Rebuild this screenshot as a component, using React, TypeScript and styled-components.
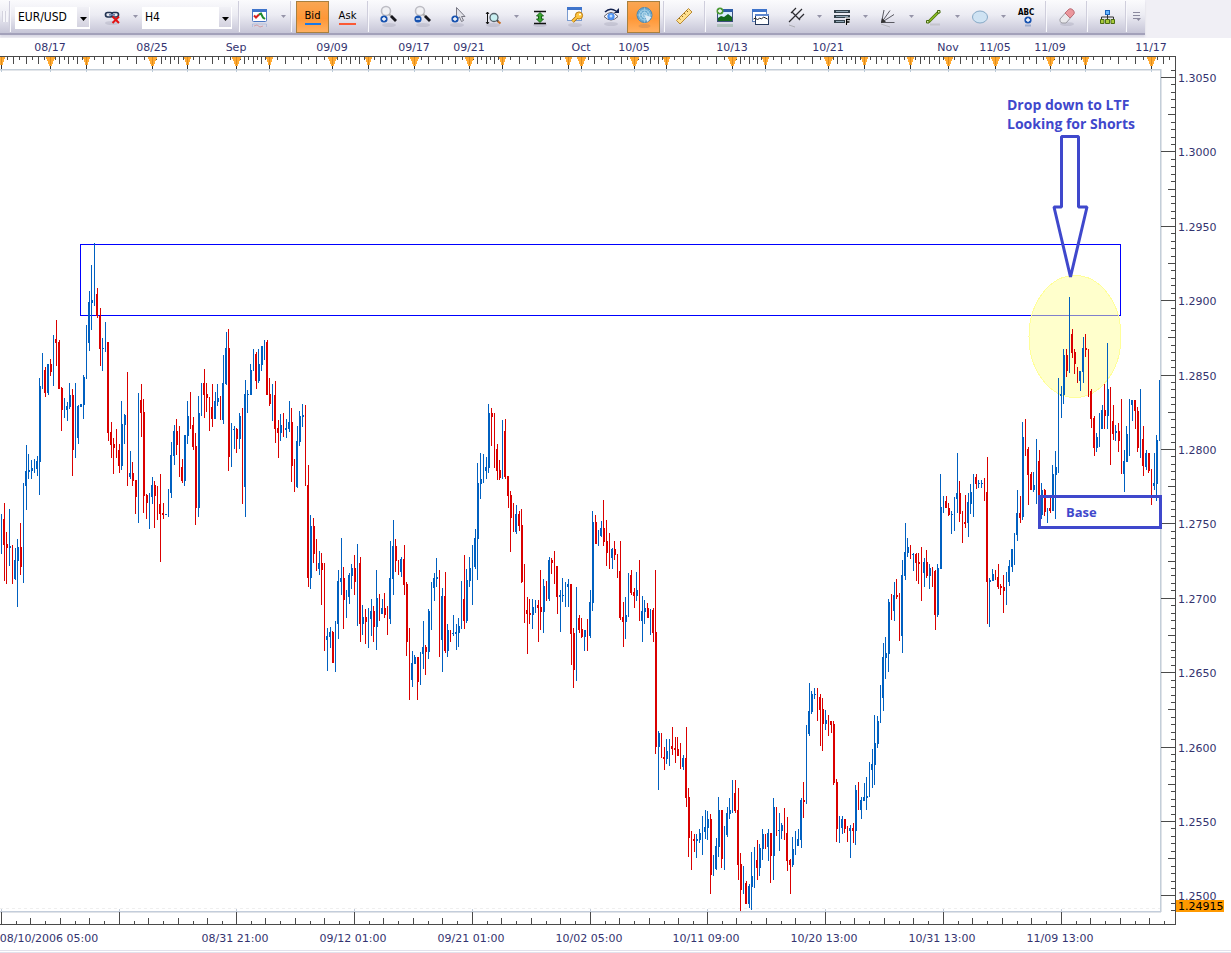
import React from "react";
import styled, { createGlobalStyle, css } from "styled-components";

const GlobalStyle = createGlobalStyle`
  * { box-sizing: border-box; }
  body { margin: 0; background: #fff; font-family: "DejaVu Sans", Verdana, sans-serif; }
`;

/* ---------- Toolbar ---------- */

const Header = styled.header`
  height: 38px;
  background: #f0eff5;
`;

const Toolbar = styled.div`
  display: flex;
  align-items: stretch;
  width: fit-content;
  height: 35px;
  background: linear-gradient(#fbfbfd 0%, #ececf3 45%, #c6c5d7 100%);
  border-bottom: 2px solid #a3a1ba;
  box-shadow: 0 2px 2px #d9d8e4;
`;

const Grip = styled.div`
  width: 10px;
  margin: 11px 0;
  border-left: 2px solid transparent;
  background: repeating-linear-gradient(90deg, #d4d3de 0 1px, #f6f6fa 1px 3px) content-box;
  padding-right: 2px;
`;

const Separator = styled.div`
  width: 1px;
  margin: 1px 0;
  background: #f8f8fc;
  box-shadow: -1px 0 0 #cfcedc;
`;

const Group = styled.div<{ $left?: number; $right?: number; $gap?: number }>`
  display: flex;
  align-items: center;
  gap: ${(p) => p.$gap ?? 0}px;
  padding: 0 ${(p) => p.$right ?? 4}px 0 ${(p) => p.$left ?? 4}px;
`;

const SelectBox = styled.div<{ $width: number }>`
  position: relative;
  width: ${(p) => p.$width}px;
  height: 22px;
  margin-right: 6px;
`;

const Select = styled.select`
  appearance: none;
  width: 100%;
  height: 100%;
  border: 0;
  border-radius: 0;
  padding: 0 16px 2px 3px;
  background: #fff;
  color: #000;
  font: 12px "DejaVu Sans Condensed", "DejaVu Sans", sans-serif;
`;

const SelectArrow = styled.span`
  position: absolute;
  top: 1px;
  right: 1px;
  bottom: 1px;
  width: 12px;
  display: flex;
  align-items: center;
  justify-content: center;
  padding-top: 4px;
  background: linear-gradient(#f1f1f6, #d4d3e0);
  pointer-events: none;
`;

const active = css`
  border: 1px solid #a8803f;
  background: linear-gradient(#f9a653, #ff9736 55%, #ffb061);
`;

const ToolButton = styled.button<{ $active?: boolean; $width?: number }>`
  display: flex;
  flex-direction: column;
  align-items: center;
  justify-content: center;
  width: ${(p) => p.$width ?? 32}px;
  height: 32px;
  padding: 0;
  border: 1px solid transparent;
  background: none;
  color: #000;
  font: 10px "DejaVu Sans", sans-serif;
  ${(p) => p.$active && active}
`;

const DropButton = styled(ToolButton)`
  width: 14px;
`;

const QuoteLabel = styled.span<{ $color: string }>`
  padding-bottom: 1px;
  line-height: 13px;
  border-bottom: 2px solid ${(p) => p.$color};
`;

const Glyph = styled.svg`
  display: block;
  flex: none;
  overflow: visible;
`;

const Caret = ({ dark = false }: { dark?: boolean }) => (
  <Glyph width="7" height="4" viewBox="0 0 7 4">
    <path d={dark ? "M0 0h7L3.5 4z" : "M1 0h5L3.5 3z"} fill={dark ? "#000" : "#9594a8"} />
  </Glyph>
);

const Badge = ({ x, y, minus }: { x: number; y: number; minus?: boolean }) => (
  <g>
    <circle cx={x} cy={y} r="3.6" fill="#1853b0" />
    <path d={minus ? `M${x - 2} ${y}h4` : `M${x - 2} ${y}h4M${x} ${y - 2}v4`} stroke="#fff" strokeWidth="1.3" />
  </g>
);

const Shade = ({ x = 16, y = 25 }: { x?: number; y?: number }) => (
  <ellipse cx={x} cy={y} rx="7" ry="2" fill="#8d8ca0" opacity=".25" />
);

const Magnifier = ({ minus }: { minus?: boolean }) => (
  <>
    <Shade x={16} />
    <circle cx="13" cy="11" r="4.5" fill="#f1f1f4" stroke="#bdbdc4" strokeWidth="1.6" />
    <path d="M16 14l2.5 2.5" stroke="#aaa" strokeWidth="2" />
    <path d="M18 16l5 5" stroke="#16161c" strokeWidth="2.8" />
    <Badge x={11} y={19} minus={minus} />
  </>
);

const icons: Record<string, React.ReactNode> = {
  unlink: (
    <>
      <Shade y={23} />
      <g fill="none" stroke="#233452" strokeWidth="1.7">
        <rect x="9.5" y="12.5" width="7" height="4.5" rx="2.2" />
        <rect x="15.5" y="12.5" width="7" height="4.5" rx="2.2" />
        <path d="M13 14.8h6" stroke="#6d83ad" />
      </g>
      <path d="M16.5 16.5l6.5 6.5M23 16.5l-6.5 6.5" stroke="#e31212" strokeWidth="2" />
    </>
  ),
  chart: (
    <>
      <rect x="8.5" y="9.5" width="14" height="12" rx="1" fill="#fff" stroke="#4a77c4" />
      <path d="M8 9h15v3H8z" fill="#3f74cb" />
      <path d="M10 15.5l2 2 3-3" fill="none" stroke="#d6201d" strokeWidth="2" />
      <path d="M15 14.5l2-1 2 4 2 1.500" fill="none" stroke="#1e8a2e" strokeWidth="2" />
      <path d="M8.5 27v-3h14v3" fill="none" stroke="#8fa7d3" opacity=".5" />
      <path d="M10 26l3-1 3 2 3-1" fill="none" stroke="#c55" opacity=".4" />
    </>
  ),
  zoomIn: <Magnifier />,
  zoomOut: <Magnifier minus />,
  pointerZoom: (
    <>
      <Shade />
      <path d="M15.5 7.5v12l3-2.5 2 4.5 2-1-2-4h3.5z" fill="#e3e3e9" stroke="#777783" />
      <Badge x={14} y={19} />
    </>
  ),
  verticalZoom: (
    <>
      <Shade x={18} />
      <path d="M12.500 12v12M11 14l1.5-2 1.5 2M11 22l1.5 2 1.5-2" fill="none" stroke="#111" />
      <circle cx="19" cy="17.5" r="4" fill="#c9f0f2" stroke="#55636b" strokeWidth="1.3" />
      <path d="M22 20.5l1.5 1" stroke="#444" strokeWidth="2" />
      <path d="M23 21.5l2.5 2" stroke="#c56b20" strokeWidth="2" />
    </>
  ),
  fit: (
    <>
      <Shade x={15} />
      <path d="M9 11.5h12M9 23.5h12" stroke="#111" strokeWidth="1.5" />
      <path d="M15 12.5l3.5 3.5h-2v3h2L15 22.500 11.500 19h2v-3h-2z" fill="#3aa52f" stroke="#176515" />
    </>
  ),
  windowKey: (
    <>
      <Shade />
      <rect x="8.5" y="7.5" width="14" height="13" fill="#fafbfe" stroke="#7a9bd0" />
      <path d="M8 7h15v3H8z" fill="#3f74cb" />
      <path d="M13.5 21.5l4.5-4.5" stroke="#a76a08" strokeWidth="3.4" />
      <circle cx="20" cy="15.5" r="3.6" fill="#ffc741" stroke="#b97911" />
      <path d="M13.5 21.5l4.5-4.5" stroke="#ffc741" strokeWidth="1.8" />
      <circle cx="21" cy="14.5" r="1" fill="#fff" />
    </>
  ),
  eye: (
    <>
      <Shade x={18} y={24} />
      <path d="M11 16.5q7-8 14 0q-7 7-14 0z" fill="#f7f7fa" stroke="#5b5b68" />
      <circle cx="18" cy="16.5" r="3.6" fill="#4c8ff0" />
      <circle cx="18" cy="16" r="1.5" fill="#bfe0ff" />
      <path d="M12 12q5-5 11-1" fill="none" stroke="#10204e" strokeWidth="1.5" />
      <path d="M21 13h5V8z" fill="#10204e" />
    </>
  ),
  radar: (
    <>
      <circle cx="16.5" cy="15" r="7.5" fill="#6aa9cf" stroke="#4b87b3" />
      <circle cx="16.5" cy="15" r="5" fill="none" stroke="#a9d4ea" />
      <circle cx="16.5" cy="15" r="2.5" fill="none" stroke="#c6e5f4" />
      <path d="M16.5 7.5v15M9 15h15M11 10l11 10M11 20l11-10" stroke="#a9d4ea" strokeWidth=".6" />
      <path d="M16.5 15l7 2-4 5z" fill="#dcebf5" />
      <ellipse cx="16.5" cy="26" rx="6" ry="2" fill="#c98a55" opacity=".5" />
    </>
  ),
  ruler: (
    <>
      <path d="M8.5 20.5L20.5 8.5l3.5 3.5L12 24z" fill="#ffe08f" stroke="#b98a34" />
      <path d="M11 18l1.5 1.5M13.5 15.5l1.5 1.5M16 13l1.5 1.5M18.5 10.5L20 12" stroke="#8a6420" />
    </>
  ),
  addImage: (
    <>
      <path d="M8 24h16v3H8z" fill="#4c8b57" opacity=".25" />
      <rect x="8.5" y="9.5" width="15" height="12" fill="#d9ecff" stroke="#3c4f7c" />
      <path d="M8 9h16v3H8z" fill="#2e5da8" />
      <path d="M9 21v-3l3-2 3 1 4-3 4 3v4z" fill="#13661c" />
      <circle cx="11" cy="11" r="3.5" fill="#4c9a35" />
      <path d="M9 11h4M11 9v4" stroke="#fff" strokeWidth="1.3" />
    </>
  ),
  windows: (
    <>
      <rect x="8.5" y="9.5" width="14" height="12" fill="#fff" stroke="#5b7fb9" />
      <path d="M8 9h15v3H8z" fill="#3f74cb" />
      <rect x="11.5" y="14.5" width="13" height="10" fill="#fff" stroke="#26395e" />
      <path d="M11 14h14v2H11z" fill="#5d86cc" />
      <path d="M9.500 19l2-1 2 2 2-2 2 1 2-2 4 2" fill="none" stroke="#222" />
    </>
  ),
  pitchfork: (
    <>
      <path d="M9 22L22 9M12 12l8 8M11 13l5-5M19 19l5-5" fill="none" stroke="#2c2c31" strokeWidth="1.2" />
      <path d="M9 25l6 2" stroke="#888" opacity=".5" />
    </>
  ),
  fibonacci: (
    <>
      <path d="M8 11.5h16M8 16.5h16M8 21.5h11" stroke="#34424b" strokeWidth="3" />
      <path d="M10 11.5h12M10 16.5h12M10 21.5h8" stroke="#90a6b4" />
      <path d="M20.5 25v-6h3.5M20.5 22h3" fill="none" stroke="#fff" strokeWidth="3" />
      <path d="M20.5 25v-5.5h3.5M20.5 22h3" fill="none" stroke="#000" strokeWidth="1.3" />
    </>
  ),
  fan: (
    <>
      <path d="M9.5 22.5L12 10M9.5 22.5L18 10.5M9.5 22.5L22 14.5M9.5 22.5h13" fill="none" stroke="#5a5a62" />
      <path d="M9 23l1-5 4 4z" fill="#333" />
      <path d="M9 24l9 3" stroke="#888" opacity=".4" />
    </>
  ),
  line: (
    <>
      <path d="M12 24.5h10" stroke="#999" strokeWidth="2" opacity=".3" />
      <path d="M10.5 22L21 11.5" stroke="#4f7410" strokeWidth="3" />
      <path d="M10.5 22L21 11.5" stroke="#8bbf24" strokeWidth="1.5" />
      <path d="M8.5 20.5H11V23H8.500zM19.5 10.5H22V13h-2.5z" fill="#d9efa6" stroke="#456a0d" />
    </>
  ),
  ellipse: <ellipse cx="16" cy="17" rx="7.5" ry="6" fill="#cfe3f3" stroke="#86a9c6" />,
  text: (
    <>
      <text x="8" y="15" fontSize="8" fontWeight="700" fontFamily="DejaVu Sans Condensed, sans-serif" fill="#000">ABC</text>
      <Badge x={18} y={20} />
      <path d="M15 25.5h6" stroke="#5173ac" strokeWidth="2" opacity=".4" />
    </>
  ),
  eraser: (
    <>
      <Shade y={24} />
      <path d="M9 19l8-9 5 5-7 8h-4q-3-1-2-4z" fill="#e9e9ec" stroke="#9b9ba3" />
      <path d="M14 13l4-4q2-1 4 1t1 4l-4 4z" fill="#eb969c" stroke="#bd7079" />
    </>
  ),
  tree: (
    <>
      <path d="M16.5 14v3M10.5 20v-3h12v3M16.5 17v3" fill="none" stroke="#333" />
      <rect x="14.5" y="10.5" width="4" height="4" fill="#66b5ff" stroke="#1c66bd" />
      <path d="M9.5 19.5H13v4H9.500zM14.500 19.500h4v4h-4zM20 19.500h3.500v4H20z" fill="#a9cb3c" stroke="#4b6b12" />
    </>
  ),
};

const Tool = ({ icon, label, ...rest }: { icon: string; label: string; $active?: boolean; $width?: number }) => (
  <ToolButton type="button" aria-label={label} {...rest}>
    <Glyph width="32" height="34" viewBox="0 0 32 34">{icons[icon]}</Glyph>
  </ToolButton>
);

const Drop = ({ label }: { label: string }) => (
  <DropButton type="button" aria-label={label}><Caret /></DropButton>
);

const Picker = ({ label, value, options, width }: { label: string; value: string; options: string[]; width: number }) => (
  <SelectBox $width={width}>
    <Select aria-label={label} defaultValue={value}>
      {options.map((o) => <option key={o}>{o}</option>)}
    </Select>
    <SelectArrow><Caret dark /></SelectArrow>
  </SelectBox>
);

/* ---------- Chart data ---------- */

/* x, direction (u/d), high-low, then an optional body: side + top-bottom */
const candleData = `
1 u 514-554;4 d 503-581 L519-545;6 d 532-584 R544-548;9 u 509-566 R546-548;12 d 545-584;15 u 548-580 L560-579;17 u 539-607 R547-561;20 d 523-575 R547-567;23 u 483-583;26 u 445-510 L471-486;
28 u 454-479 R470-472;31 u 460-479 R468-471;34 u 459-473;37 u 456-476 L461-469;39 u 378-495 R386-462;42 u 353-389;45 d 367-397 L370-393;48 u 364-395 L364-393;50 d 359-376 R364-372;53 u 335-386;
56 d 320-366 L339-343;59 d 340-389 L342-389;61 d 387-431 R388-410;64 u 398-418;67 u 402-421 L406-410;69 u 383-409 R395-407;72 d 389-476 R395-450;75 u 383-458;78 u 405-444 L406-438;80 u 404-407 R404-407;
83 u 375-419 R377-405;86 u 325-379;89 u 291-351 L302-343;91 u 265-330 R300-303;94 u 243-306;97 d 288-318 L294-316;100 d 308-366 L316-349;102 u 338-371 R348-349;105 u 322-352;108 d 342-441 L342-433;
111 d 422-458 L432-445;113 d 438-474 R444-448;116 d 429-458;119 d 444-473 L450-466;121 u 401-470 R424-466;124 u 414-444 R415-425;127 d 372-486;130 u 451-479 L473-477;132 d 462-486 R473-481;135 d 480-514 R480-497;
138 u 393-523;141 d 384-437 L400-413;143 d 399-513 R412-496;146 d 494-519 R495-503;149 u 493-529;152 u 477-504 L485-497;154 d 481-528 R485-496;157 d 486-520;160 d 474-562 L504-514;163 d 503-519 L513-515;
165 u 514-515 R514-515;168 u 489-517;171 u 442-498 L455-493;174 u 425-465 L431-456;176 d 419-455 R431-445;179 d 426-477;182 d 459-483 L467-481;184 u 435-486 R435-481;187 u 401-444 R416-436;190 d 392-429;
193 d 417-450 L425-447;195 d 433-525 R446-508;198 u 396-517 R413-508;201 u 383-416;204 d 369-418 L383-395;206 d 383-412 R394-398;209 d 397-431;212 d 384-427 L407-419;215 u 392-419 L401-419;217 u 384-406 R398-402;
220 d 396-420;223 u 355-424 L383-420;226 u 332-385 L348-384;228 d 329-471 R348-457;231 u 423-467;234 u 426-449 L429-430;236 d 428-453 R429-439;239 u 413-449 R416-439;242 d 408-504;245 u 380-517 L394-487;
247 u 390-413 R394-395;250 u 364-395 R370-395;253 u 349-371;256 d 352-389 L354-381;258 u 349-383 R364-381;261 u 346-371 R346-365;264 u 340-360;267 d 340-395 L342-395;269 d 378-406 R394-404;272 u 384-421;
275 d 381-443 L395-429;278 d 420-458 L428-433;280 u 414-441 R425-433;283 d 413-437;286 u 419-438 L428-430;289 u 401-432 L422-429;291 d 408-482 R422-466;294 d 459-492;297 u 426-488 L441-487;299 u 411-446 R416-442;
302 u 404-427 R415-417;305 d 405-486;308 d 465-587 L485-578;310 u 515-589 R526-578;313 d 518-563 R526-554;316 d 539-571;319 u 551-575 L563-569;321 d 553-605 R563-570;324 d 563-651;327 u 628-671 L636-640;
330 u 627-648 L632-637;332 d 631-663 R632-663;335 u 621-672;338 u 570-639 L581-624;341 u 538-595 L578-582;343 d 567-629 R578-600;346 u 590-618;349 u 573-604 L575-597;351 u 564-589 R568-576;354 d 555-595 R568-582;
357 u 544-626;360 d 557-642 L563-624;362 u 605-635 R617-624;365 d 609-644 R617-622;368 u 608-648;371 u 599-636 L611-619;373 d 606-642 R611-627;376 u 570-650 R598-627;379 d 594-621;382 u 599-614 L608-614;
384 d 593-618 R608-615;387 d 606-635;390 u 541-624 L578-619;393 u 520-595 L546-579;395 d 539-572 R546-561;398 d 560-575;401 u 557-577 L559-572;404 d 545-595 L559-585;406 d 582-656 R584-642;409 d 628-700;
412 u 651-687 L663-680;414 u 655-664 R657-664;417 d 657-700 R657-682;420 u 652-685;423 u 621-669 L647-654;425 d 645-675 R647-652;428 u 609-659 R611-652;431 u 582-630;434 u 573-601 L578-588;436 u 558-587 R577-579;
439 d 570-657;442 u 588-672 L596-640;445 d 572-653 L596-651;447 u 624-657 R630-651;450 d 630-642;453 u 615-636 L633-634;456 u 624-650 L632-634;458 u 618-647 R626-633;461 u 581-629;464 d 555-629 L599-621;
466 u 569-623 R580-621;469 u 557-587 R568-581;472 u 545-605;475 u 529-569 L538-567;477 u 463-580 R483-539;480 u 453-499 R479-484;483 u 454-483;486 u 457-479 L467-471;488 u 404-473 R413-468;491 d 408-446 R413-417;
494 d 413-468;497 d 444-480 L449-471;499 d 460-480 R470-478;502 u 420-479;505 d 419-479 L431-477;508 d 476-508 L476-496;510 d 491-552 R495-518;513 d 503-532;516 u 505-534 L514-532;519 d 511-531 L514-526;
521 d 509-583 R525-582;524 d 564-623;527 d 597-654 L610-614;529 d 599-624 R613-615;532 u 599-629 R607-615;535 u 600-613;538 d 600-642 L605-608;540 d 570-630 R607-612;543 u 579-633 R586-612;546 d 581-601;
549 u 557-601 L560-599;551 d 558-574 R560-563;554 d 551-584;557 d 566-614 L566-597;560 u 590-632 L595-597;562 u 578-602 R595-596;565 u 582-607;568 u 579-607 L584-587;571 d 584-665 L584-634;573 d 628-688 R633-670;
576 u 587-681;579 d 615-633 L618-630;581 d 618-638 R629-637;584 u 630-651 R630-637;587 d 619-651;590 u 590-638 L602-636;592 u 511-611 R522-603;595 d 515-544 R522-544;598 u 530-546;601 u 521-537 L528-536;
603 d 500-546 R528-542;606 d 520-566 R541-553;609 d 533-569;612 u 548-569 L549-558;614 d 541-560 R549-555;617 d 554-578;620 d 541-620 L571-618;623 d 602-647 L617-622;625 u 597-639 R615-622;628 u 573-617;
631 d 570-595 L575-593;634 d 588-608 L592-596;636 u 572-601 R590-596;639 d 560-621;642 u 596-642 L611-621;644 u 600-624 R608-612;647 d 603-618 R608-618;650 u 609-635;653 d 608-642 L610-633;655 d 570-754 R632-747;
658 u 731-790 R733-747;661 d 733-758;664 d 747-770 L757-759;666 u 739-764 R751-759;669 u 739-766;672 d 727-755 L746-749;675 d 737-763 L748-750;677 d 737-756 R749-756;680 d 743-769;683 u 755-770 L758-767;
686 d 727-807 L758-798;688 d 788-857 R797-838;691 d 831-870;694 d 834-852 L839-841;696 u 834-858 R839-841;699 u 829-843 R833-840;702 u 816-855;705 u 810-839 L827-832;707 u 811-840 R819-828;710 d 814-894 R819-875;
713 u 855-876;716 u 838-870 L846-869;718 u 797-857 R810-847;721 d 810-868 R810-859;724 u 826-870;727 u 807-837 L813-835;729 u 798-819 R810-814;732 u 780-813;735 d 780-813 L793-811;738 d 788-880 L810-865;
740 d 853-911 R864-890;743 u 866-894;746 d 881-904 L883-904;749 u 884-908 L886-904;751 u 852-910 R876-887;754 u 847-888;757 d 840-880 L860-868;759 u 844-876 R848-868;762 u 829-860 R834-849;765 d 834-849;
768 u 829-861 L833-847;770 d 833-883 R833-856;773 u 798-880 R807-856;776 d 807-836;779 u 813-851 L830-831;781 u 823-839 R825-831;784 d 808-840;787 d 817-871 L833-861;790 d 859-894 L860-865;792 u 837-867 R849-865;
795 u 831-855;798 u 829-846 L839-846;801 u 798-848 L800-840;803 d 782-818 R800-802;806 u 725-804;809 u 683-736 L711-734;811 u 691-714 R694-712;814 u 688-699 R694-695;817 d 688-721;820 d 694-746 L697-710;
822 d 698-751 R709-724;825 u 710-730 R720-724;828 d 715-736;831 d 721-733 L721-725;833 d 721-785 R724-783;836 d 779-842 R782-829;839 u 816-843;842 u 816-834 L819-828;844 d 819-833 R819-829;847 d 826-842;
850 u 825-858 L828-831;853 d 823-843 L828-831;855 u 785-845 R790-831;858 d 782-810;861 u 797-819 L800-810;864 u 783-801 L797-801;866 u 777-810 R796-798;869 u 762-797;872 u 749-788 L764-770;874 u 715-785 R743-765;
877 u 716-748 R721-744;880 u 685-723;883 u 643-711 L657-698;885 u 637-679 R653-658;888 u 599-672 R602-654;891 d 594-620;894 u 582-621 L595-611;896 d 579-599 R595-597;899 d 593-641;902 u 560-653 L575-636;
905 u 523-580 L552-576;907 u 538-557 R547-553;910 d 545-559;913 u 553-571 L554-555;916 d 553-581 L554-563;918 d 553-584 R562-564;921 d 547-601;924 u 558-587 L562-573;926 d 550-578 R562-576;929 u 564-589 R568-576;
932 d 567-587;935 d 570-630 L571-615;937 u 564-617 R568-615;940 u 474-569 R507-569;943 u 496-513;946 d 496-508 L501-508;948 d 503-516 R508-515;951 u 511-534 R514-515;954 u 497-531;957 u 453-513 L493-499;
959 d 481-522 R493-514;962 d 511-543;965 d 495-528 L522-524;968 u 493-537 L502-523;970 u 484-514 R492-504;973 u 474-517;976 d 474-489 L477-484;978 u 480-488 R483-484;981 u 480-488 R483-484;984 d 478-501;
987 d 457-624 L492-582;989 u 578-627 R580-582;992 u 569-581 R574-581;995 d 570-580;998 d 564-589 L577-587;1000 d 584-595 R586-588;1003 d 575-613 R587-591;1006 u 572-605;1009 u 560-586 L566-582;1012 u 549-572 L549-567;
1014 u 533-565;1017 u 490-541 L513-535;1020 d 496-523 L513-518;1022 u 422-520 R437-517;1025 d 419-456;1028 d 447-505 L449-475;1031 d 472-490 L474-490;1033 u 472-492 R485-490;1036 u 439-504;1039 d 450-518 L461-496;
1041 u 483-519 R490-515;1044 d 489-516 R490-512;1047 u 508-523;1050 d 496-513 L508-511;1052 u 465-511 R474-511;1055 u 451-519 R467-475;1058 u 378-473;1061 u 386-418 L394-396;1063 u 349-404 R355-395;1066 d 349-377 R355-371;
1069 u 297-373;1072 d 329-358 L334-353;1074 d 349-374 R352-364;1077 d 367-383;1080 u 371-391 L371-381;1083 u 337-383 L348-372;1085 d 334-357 R348-350;1088 d 349-397;1091 d 389-428 L391-419;1094 d 416-456 L418-448;
1096 u 433-452 R437-448;1099 u 413-447;1102 u 405-429 L410-429;1104 d 384-429 R410-416;1107 u 343-429 R389-416;1110 d 387-465;1113 d 405-440 L421-434;1115 u 425-441 R431-433;1118 d 423-452 R431-441;1121 d 399-474;
1124 u 450-492 L461-474;1126 u 426-462 R434-462;1129 u 399-456;1132 u 400-421 L400-405;1135 d 400-429 L400-411;1137 d 407-452 R411-448;1140 u 389-458;1143 d 426-476 L439-466;1146 u 450-470 L453-467;1148 d 453-473 R453-471;
1151 d 469-505;1154 u 453-490 L483-486;1156 u 435-501 R440-484;1159 u 380-441`;

const candlePath = (direction: string) =>
  candleData
    .split(";")
    .map((row) => row.trim().split(" "))
    .filter((row) => row[1] === direction)
    .map(([x, , range, body]) => {
      const [high, low] = range.split("-").map(Number);
      let d = `M${x} ${high}h1V${low}h-1z`;
      if (body) {
        const [top, bottom] = body.slice(1).split("-").map(Number);
        d += `M${Number(x) + (body[0] === "L" ? -1 : 1)} ${top}h1V${bottom}h-1z`;
      }
      return d;
    })
    .join("");

const upPath = candlePath("u");
const downPath = candlePath("d");

const sessions: [number, string?][] = [
  [1], [50, "08/17"], [86], [152, "08/25"], [187], [236, "Sep"], [269], [332, "09/09"], [368],
  [414, "09/17"], [469, "09/21"], [502], [568], [581, "Oct"], [634, "10/05"], [666], [732, "10/13"],
  [765], [828, "10/21"], [864], [910], [948, "Nov"], [995, "11/05"], [1050, "11/09"], [1085], [1151, "11/17"],
];

const times: [number, string][] = [
  [1, "08/10/2006 05:00"], [119, ""], [236, "08/31 21:00"], [354, "09/12 01:00"], [472, "09/21 01:00"],
  [590, "10/02 05:00"], [707, "10/11 09:00"], [825, "10/20 13:00"], [943, "10/31 13:00"], [1061, "11/09 13:00"],
];

const topTicks = sessions
  .map(([x], i) => {
    const next = sessions[i + 1]?.[0] ?? 1199;
    if (next - x < 20) return "";
    return [1, 2, 3, 4, 5, 6, 7]
      .map((k) => [Math.round(x + ((next - x) * k) / 8), k % 2 ? 3 : 7])
      .filter(([tx]) => tx < 1173)
      .map(([tx, h]) => `M${tx} 57h1v${h}h-1z`)
      .join("");
  })
  .join("");

const bottomTicks = times
  .map(([x]) =>
    [1, 2, 3, 4, 5, 6, 7]
      .map((k) => [Math.round(x + 14.7 * k), k % 2 ? 3 : 6])
      .map(([tx, h]) => `M${tx} ${924 - h}h1v${h}h-1z`)
      .join("") + `M${x} 912h1v12h-1z`
  )
  .join("");

const priceY = (tick: number) => Math.round(77 + tick * 7.44);

const priceTicks = Array.from({ length: 114 }, (_, i) => i - 1)
  .map((i) => {
    const w = i % 10 === 0 ? 14 : i % 5 === 0 ? 7 : 4;
    return `M${1175 - w} ${priceY(i)}h${w}v1h-${w}z`;
  })
  .join("");

const prices = Array.from({ length: 12 }, (_, i) => ({ y: priceY(i * 10), text: (1.305 - i * 0.005).toFixed(4) }));

/* ---------- Chart ---------- */

const Chart = styled.svg`
  display: block;
  width: 100%;
  height: auto;
  background: #fff;
`;

const AxisText = styled.text<{ $color?: string }>`
  font: 11px "DejaVu Sans", Verdana, sans-serif;
  fill: ${(p) => p.$color ?? "#33336f"};
`;

const NoteText = styled.text<{ $size: number }>`
  font: 700 ${(p) => p.$size}px "Open Sans", "Segoe UI", sans-serif;
  fill: #3f48cc;
`;

const Footer = styled.footer`
  height: 3px;
  border: solid #e2e1ec;
  border-width: 1px 0;
`;

const PriceChart = () => (
  <Chart viewBox="0 38 1231 912" role="img" aria-label="EUR/USD H4 price chart">
    <g shapeRendering="crispEdges">
      <path d="M0 69.5h1161" stroke="#c3ced9" fill="none" />
      <path d="M0 70.5h1160" stroke="#e3e6ea" fill="none" />
      <path d="M1160.5 69v842" stroke="#c3ced9" />
      <path d="M1161.5 69v843" stroke="#e0e3e8" />
      <path d="M0 908.5h1160" stroke="#efefef" strokeDasharray="3 3" />
      <path d="M0 911.5h1161" stroke="#c3cddb" />
      <path d="M0 912.5h1161" stroke="#e0e3e8" />
      <path d="M0 56h1176v869H0v-1h1175V57H0z" fill="#4a4a4a" />
      <path d={topTicks + bottomTicks + priceTicks} fill="#4a4a4a" />
      {sessions.map(([x, label]) => (
        <g key={x}>
          <path d={`M${x} 65h1v4h-1z`} fill="#333" />
          <path d={`M${x} 70h1v2h-1z`} fill="#bccbd8" />
          <path d={label ? `M${x - 4} 57h9v2h-1v2h-1v3h-1v2h-3v-2h-1v-3h-1v-2h-1z` : `M${x - 3} 57h7v2h-1v3h-1v3h-3v-3h-1v-3h-1z`} fill="#ffaa33" />
          <path d={`M${x} 57h1v8h-1z`} fill="#e08e1d" />
        </g>
      ))}
      {times.map(([x]) => <path key={x} d={`M${x} 909h1v3h-1z`} fill="#c3cddb" />)}
      <rect x="80.5" y="244.5" width="1040" height="71" fill="none" stroke="#0000ff" />
      <ellipse cx="1075" cy="336.5" rx="46" ry="61" fill="#ffff99" fillOpacity=".5" stroke="#ffff99" />
      <path d={upPath} fill="#0060c0" />
      <path d={downPath} fill="#da0000" />
      <rect x="1039.5" y="496.5" width="121" height="31" fill="none" stroke="#3f48cc" strokeWidth="3" />
    </g>
    <path d="M1061.5 136.5H1078.5V207H1087L1070.5 277L1054 207H1061.5Z" fill="none" stroke="#3f48cc" strokeWidth="3" strokeLinejoin="bevel" />
    {sessions.map(([x, label]) => label && <AxisText key={x} x={x} y="51" textAnchor="middle">{label}</AxisText>)}
    {times.map(([x, label]) =>
      label && <AxisText key={x} x={Math.max(x - 1, 49)} y="942" textAnchor="middle">{label}</AxisText>
    )}
    {prices.map(({ y, text }) => <AxisText key={text} x="1178" y={y + 5}>{text}</AxisText>)}
    <rect x="1176" y="900" width="48" height="12" fill="#ff9900" />
    <AxisText $color="#000" x="1178" y="910">1.24915</AxisText>
    <NoteText $size={14} x="1007" y="110">Drop down to LTF</NoteText>
    <NoteText $size={14} x="1007" y="129">Looking for Shorts</NoteText>
    <NoteText $size={13} x="1066" y="517">Base</NoteText>
  </Chart>
);

export default function App() {
  return (
    <>
      <GlobalStyle />
      <Header>
        <Toolbar role="toolbar" aria-label="Chart tools">
          <Grip />
          <Separator />
          <Group $right={1}>
            <Picker label="Symbol" value="EUR/USD" options={["EUR/USD", "GBP/USD", "USD/JPY"]} width={75} />
            <Tool icon="unlink" label="Unlink" />
            <Drop label="Link options" />
            <Picker label="Period" value="H4" options={["H1", "H4", "D1"]} width={90} />
          </Group>
          <Separator />
          <Group $right={1}>
            <Tool icon="chart" label="Chart type" />
            <Drop label="Chart types" />
          </Group>
          <Separator />
          <Group $gap={2}>
            <ToolButton type="button" $active $width={33}><QuoteLabel $color="#1878e8">Bid</QuoteLabel></ToolButton>
            <ToolButton type="button" $width={33}><QuoteLabel $color="#fb5a35">Ask</QuoteLabel></ToolButton>
          </Group>
          <Separator />
          <Group $gap={2}>
            <Tool icon="zoomIn" label="Zoom in" />
            <Tool icon="zoomOut" label="Zoom out" />
            <Tool icon="pointerZoom" label="Zoom to pointer" />
            <Tool icon="verticalZoom" label="Vertical zoom" />
            <Drop label="Vertical zoom options" />
            <Tool icon="fit" label="Fit height" />
            <Tool icon="windowKey" label="Chart settings" />
            <Tool icon="eye" label="Show objects" />
            <Tool icon="radar" label="Crosshair" $active $width={33} />
          </Group>
          <Separator />
          <Group $left={3} $right={5}>
            <Tool icon="ruler" label="Measure" />
          </Group>
          <Separator />
          <Group $left={3} $gap={3}>
            <Tool icon="addImage" label="Add image" />
            <Tool icon="windows" label="Indicators" />
          </Group>
          <Group $left={0}>
            <Tool icon="pitchfork" label="Pitchfork" />
            <Drop label="Pitchforks" />
            <Tool icon="fibonacci" label="Fibonacci" />
            <Drop label="Fibonacci tools" />
            <Tool icon="fan" label="Gann fan" />
            <Drop label="Gann tools" />
            <Tool icon="line" label="Trend line" />
            <Drop label="Lines" />
            <Tool icon="ellipse" label="Ellipse" />
            <Drop label="Shapes" />
            <Tool icon="text" label="Text label" />
          </Group>
          <Separator />
          <Group>
            <Tool icon="eraser" label="Erase" />
          </Group>
          <Separator />
          <Group $left={3} $right={3}>
            <Tool icon="tree" label="Object tree" />
          </Group>
          <Separator />
          <Group $left={0} $right={0}>
            <ToolButton type="button" aria-label="More tools" $width={18}>
              <Glyph width="9" height="10" viewBox="0 0 9 10">
                <path d="M1 .5h7M1 3.5h7M1 6.5h4" stroke="#8b8a9e" />
                <path d="M4 6h5L6.5 9z" fill="#8b8a9e" />
              </Glyph>
            </ToolButton>
          </Group>
        </Toolbar>
      </Header>
      <main><PriceChart /></main>
      <Footer />
    </>
  );
}
